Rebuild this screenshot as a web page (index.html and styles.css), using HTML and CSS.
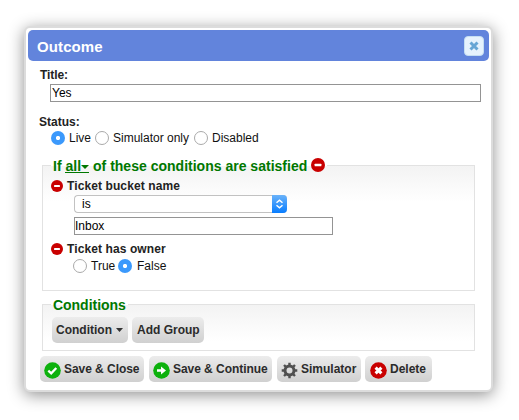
FILE: index.html
```html
<!DOCTYPE html>
<html lang="en">
<head>
<meta charset="utf-8">
<title>Outcome</title>
<link rel="stylesheet" href="styles.css">
</head>
<body>
<svg class="defs" width="0" height="0">
  <symbol id="minus" viewBox="0 0 14 14"><circle cx="7" cy="7" r="7" fill="#c90000"/><rect x="3.6" y="5.7" width="6.8" height="2.6" rx=".6" fill="#fff"/></symbol>
</svg>
<div class="dialog">
  <div class="header">
    <span>Outcome</span>
    <button class="close" aria-label="Close"><svg width="10" height="10" viewBox="0 0 10 10"><path d="M1.5 1.5 8.5 8.5M8.5 1.5 1.5 8.5" stroke="#67a6d5" stroke-width="3"/></svg></button>
  </div>
  <div class="label title-label">Title:</div>
  <div class="field title-field">Yes</div>
  <div class="label status-label">Status:</div>
  <div class="radios status">
    <label class="opt live"><i class="radio on"></i>Live</label>
    <label class="opt sim"><i class="radio"></i>Simulator only</label>
    <label class="opt"><i class="radio"></i>Disabled</label>
  </div>
  <fieldset class="group main">
    <legend><span class="legend-text">If <u>all<svg width="8" height="4" viewBox="0 0 8 4"><path d="M0 0h8L4 4z" fill="#007800"/></svg></u> of these conditions are satisfied</span><svg class="legend-icon" width="14" height="14"><use href="#minus"/></svg></legend>
    <div class="cond first"><svg width="12" height="12"><use href="#minus"/></svg><span class="label">Ticket bucket name</span></div>
    <div class="select"><span>is</span><i class="stepper"><svg width="15" height="18" viewBox="0 0 15 18"><path d="M4.5 7.8 7.5 5.2 10.5 7.8M4.5 10.2 7.5 12.8 10.5 10.2" fill="none" stroke="#fff" stroke-width="1.5"/></svg></i></div>
    <div class="field inbox">Inbox</div>
    <div class="cond second"><svg width="12" height="12"><use href="#minus"/></svg><span class="label">Ticket has owner</span></div>
    <div class="radios owner">
      <label class="opt true"><i class="radio"></i>True</label>
      <label class="opt false"><i class="radio on"></i>False</label>
    </div>
  </fieldset>
  <fieldset class="group extra">
    <legend><span class="legend-text">Conditions</span></legend>
    <div class="bar">
      <button class="btn condition">Condition<svg width="7" height="4" viewBox="0 0 7 4"><path d="M0 0h7L3.5 4z" fill="#333"/></svg></button>
      <button class="btn add">Add Group</button>
    </div>
  </fieldset>
  <div class="actions">
    <button class="btn b-close"><svg width="17" height="17" viewBox="0 0 17 17"><circle cx="8.5" cy="8.5" r="8.3" fill="#0db10d"/><path d="M4.3 8.7 7.2 11.4 12.3 6" fill="none" stroke="#fff" stroke-width="2.3"/></svg>Save &amp; Close</button>
    <button class="btn b-continue"><svg width="17" height="17" viewBox="0 0 17 17"><circle cx="8.5" cy="8.5" r="8.3" fill="#0db10d"/><path d="M4 7.3H8V4.6L13 8.5 8 12.4V9.7H4z" fill="#fff"/></svg>Save &amp; Continue</button>
    <button class="btn b-sim"><svg width="17" height="17" viewBox="0 0 17 17"><g stroke="#505050" fill="none"><circle cx="8.5" cy="8.5" r="4.5" stroke-width="3"/><path d="M8.5.7V4M8.5 13V16.3M.7 8.5H4M13 8.5H16.3M3 3 5.2 5.2M11.8 11.8 14 14M14 3 11.8 5.2M5.2 11.8 3 14" stroke-width="2.4"/></g></svg>Simulator</button>
    <button class="btn b-delete"><svg width="17" height="17" viewBox="0 0 17 17"><circle cx="8.5" cy="8.5" r="8.3" fill="#c90000"/><path d="M5.6 5.6 11.4 11.4M11.4 5.6 5.6 11.4" stroke="#fff" stroke-width="3"/></svg>Delete</button>
  </div>
</div>
</body>
</html>
```
FILE: styles.css
```css
* { box-sizing: border-box; }
body {
  margin: 0;
  padding: 26px 0 0 24px;
  width: 519px;
  height: 420px;
  overflow: hidden;
  background: #fff;
  font: 12px/16px "Liberation Sans", Arial, sans-serif;
  color: #222;
}
.defs { display: none; }
svg { display: block; flex: none; }
.dialog {
  width: 469px;
  height: 366px;
  padding: 2px;
  border: 2px solid #dcdcdc;
  border-radius: 6px;
  background: #fff;
  box-shadow: 0 3px 16px 0 rgba(0, 0, 0, .44);
}
.header {
  display: flex;
  align-items: center;
  justify-content: space-between;
  height: 31px;
  padding: 0 5px 0 9px;
  border-radius: 5px;
  background: #6284dc;
  color: #fff;
  font-size: 15px;
  font-weight: bold;
  letter-spacing: .1px;
}
.header span { padding-top: 2px; }
.close {
  display: flex;
  align-items: center;
  justify-content: center;
  width: 20px;
  height: 20px;
  margin-top: 1px;
  padding: 0;
  border: 1px solid #c5def2;
  border-radius: 4px;
  background: #e6f2fd;
}
.label { font-weight: bold; }
.title-label { margin: 6px 0 0 12px; letter-spacing: -.1px; }
.field {
  height: 18px;
  padding: 0 1px;
  border: 1px solid #949494;
  background: #fff;
  color: #000;
}
.title-field { width: 431px; margin: 1px 0 0 22px; }
.status-label { margin: 12px 0 0 11px; }
.radios { display: flex; height: 16px; }
.opt { display: flex; align-items: center; gap: 4px; color: #111; white-space: nowrap; }
.radio {
  width: 14px;
  height: 14px;
  border: 1px solid #aaa;
  border-radius: 50%;
  background: #fff;
}
.radio.on { border: 0; background: radial-gradient(circle, #fff 1.7px, #3b99fc 2.5px); }
.status { margin-left: 23px; }
.live { width: 44px; }
.sim { width: 99px; }
.group {
  width: 433px;
  min-width: 0;
  margin: 0 0 0 14px;
  padding: 0;
  border: 1px solid #e2e2e2;
  background: linear-gradient(#f3f3f3, #fff 36px);
}
legend {
  display: flex;
  align-items: center;
  height: 20px;
  margin-left: 8px;
  padding: 0 2px;
  color: #007800;
  font-size: 14px;
  font-weight: bold;
}
.legend-text { white-space: nowrap; padding-top: 2px; }
.main { height: 136px; margin-top: 9px; }
.main .legend-text { letter-spacing: .01px; }
.extra .legend-text { letter-spacing: -.03px; }
.legend-icon { margin-left: 4px; }
u {
  padding-bottom: 1px;
  text-decoration: none;
  background: linear-gradient(#007800, #007800) 0 calc(100% - 2px) / 100% 1px no-repeat;
}
u svg { display: inline-block; vertical-align: 2px; }
.cond { display: flex; align-items: center; gap: 4px; height: 16px; margin-left: 8px; }
.cond .label { letter-spacing: .1px; }
.cond svg { margin-top: -1px; }
.first { margin-top: 3px; }
.select {
  display: flex;
  width: 213px;
  height: 18px;
  margin: 1px 0 0 31px;
  border: 1px solid #c2c2c2;
  border-right: 0;
  border-radius: 4px;
  background: #fff;
  color: #000;
}
.select span { flex: 1; padding-left: 7px; }
.stepper {
  width: 15px;
  height: 18px;
  margin-top: -1px;
  border-radius: 0 4px 4px 0;
  background: linear-gradient(#6bb3fa, #087dff);
}
.inbox { width: 259px; margin: 4px 0 0 31px; padding-left: 0; }
.second { margin-top: 6px; }
.owner { margin-left: 30px; margin-top: 1px; }
.true { width: 45px; }
.false { gap: 5px; }
.extra { height: 57px; margin-top: 3px; }
.bar { display: flex; gap: 4px; margin: 3px 0 0 9px; }
.btn {
  display: flex;
  align-items: center;
  height: 26px;
  padding: 0;
  border: 0;
  border-radius: 5px;
  background: linear-gradient(#ececec, #d0d0d0);
  color: #2b2b2b;
  font: bold 12px/16px "Liberation Sans", Arial, sans-serif;
  white-space: nowrap;
}
.condition { width: 76px; padding-left: 4px; gap: 4px; }
.add { width: 72px; padding-left: 5px; }
.actions { display: flex; margin: 5px 0 0 12px; }
.actions .btn { padding-left: 4px; gap: 3px; }
.actions svg { margin-top: 2px; }
.b-close { width: 104px; margin-right: 5px; letter-spacing: -.05px; }
.b-continue { width: 123px; margin-right: 5px; letter-spacing: -.05px; }
.b-sim { width: 84px; margin-right: 4px; }
.actions .b-delete { width: 67px; padding-left: 5px; }
```
